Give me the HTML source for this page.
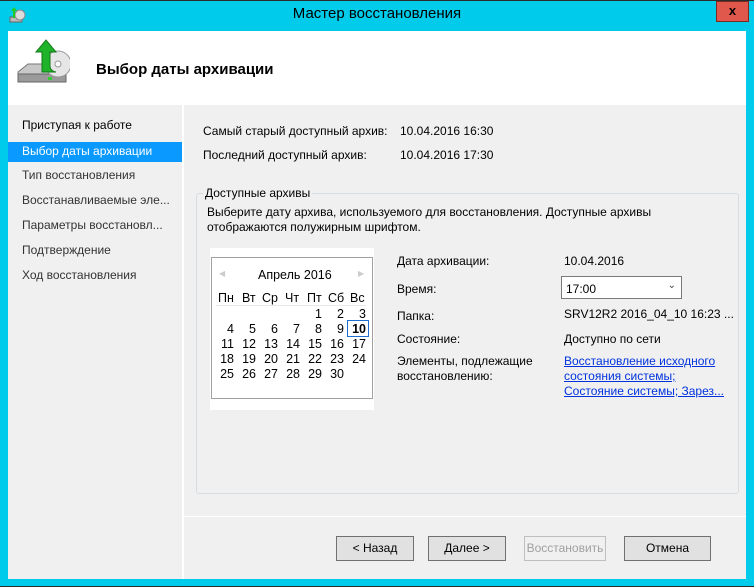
<!DOCTYPE html><html><head><meta charset="utf-8"><style>
*{margin:0;padding:0;box-sizing:border-box}
body{width:754px;height:587px;background:#00cbea;font-family:"Liberation Sans",sans-serif;font-size:12px;color:#000;position:relative;overflow:hidden}
.a{position:absolute;white-space:nowrap}
.nav{color:#333}
.btn{position:absolute;top:536px;height:25px;background:#e1e1e1;border:1px solid #707070;text-align:center;line-height:23px;font-size:12px}
.cal span{position:absolute;width:22px;text-align:right;font-size:12.5px}
</style></head><body>
<div class="a" style="left:0;top:0;width:754px;height:1px;background:#2b2b2b"></div>
<div class="a" style="left:0;top:586px;width:754px;height:1px;background:#2b2b2b"></div>
<div class="a" style="left:0;top:5px;width:754px;text-align:center;font-size:15px;color:#000">Мастер восстановления</div>
<div class="a" style="left:716px;top:1px;width:33px;height:21px;background:#e0574b;border:1px solid #7a2a24;text-align:center;font-weight:bold;font-size:13px;line-height:18px">x</div>
<svg class="a" style="left:8px;top:6px" width="18" height="18" viewBox="0 0 18 18"><rect x="2" y="11" width="12" height="5" fill="#bbb" stroke="#666"/><circle cx="12" cy="9" r="5" fill="#ddd" stroke="#888"/><path d="M5 12V5H3l3-4 3 4H7v7z" fill="#2c2"/></svg>
<div class="a" style="left:8px;top:31px;width:738px;height:548px;background:#f0f0f0"></div>
<div class="a" style="left:8px;top:31px;width:738px;height:74px;background:#fff"></div>
<div class="a" style="left:182px;top:105px;width:2px;height:474px;background:#fff"></div>
<div class="a" style="left:184px;top:516px;width:562px;height:1px;background:#fff"></div>
<svg class="a" style="left:14px;top:38px" width="56" height="50" viewBox="0 0 56 50"><path d="M4 34l10-8h34l4 8v8H4z" fill="#c8c8c8" stroke="#777"/><rect x="4" y="36" width="48" height="8" fill="#9a9a9a" stroke="#666"/><rect x="34" y="39" width="4" height="3" fill="#3c3"/><circle cx="44" cy="26" r="13" fill="#e6e6e6" stroke="#999"/><circle cx="44" cy="26" r="3" fill="#fff" stroke="#999"/><path d="M28 34V14h-6l10-12 10 12h-6v14c0 4 4 6 6 6z" fill="#1fb32a" stroke="#127a1a"/></svg>
<div class="a" style="left:96px;top:61px;font-size:15px;font-weight:bold">Выбор даты архивации</div>
<div class="a" style="left:22px;top:118px">Приступая к работе</div>
<div class="a" style="left:8px;top:142px;width:174px;height:20px;background:#0a99ff"></div>
<div class="a" style="left:22px;top:144px;color:#fff">Выбор даты архивации</div>
<div class="a nav" style="left:22px;top:168px">Тип восстановления</div>
<div class="a nav" style="left:22px;top:193px">Восстанавливаемые эле...</div>
<div class="a nav" style="left:22px;top:218px">Параметры восстановл...</div>
<div class="a nav" style="left:22px;top:243px">Подтверждение</div>
<div class="a nav" style="left:22px;top:268px">Ход восстановления</div>
<div class="a" style="left:203px;top:124px">Самый старый доступный архив:</div>
<div class="a" style="left:400px;top:124px">10.04.2016 16:30</div>
<div class="a" style="left:203px;top:148px">Последний доступный архив:</div>
<div class="a" style="left:400px;top:148px">10.04.2016 17:30</div>
<div class="a" style="left:196px;top:193px;width:543px;height:301px;border:1px solid #d8dde2;border-radius:3px"></div>
<div class="a" style="left:203px;top:186px;background:#f0f0f0;padding:0 2px">Доступные архивы</div>
<div class="a" style="left:207px;top:205px;line-height:15px">Выберите дату архива, используемого для восстановления. Доступные архивы<br>отображаются полужирным шрифтом.</div>
<div class="a" style="left:210px;top:248px;width:164px;height:162px;background:#fff"></div>
<div class="a" style="left:211px;top:257px;width:162px;height:142px;border:1px solid #a0a0a0"></div>
<div class="a" style="left:219px;top:269px;color:#ccc;font-size:8px">◀</div>
<div class="a" style="left:358px;top:269px;color:#ccc;font-size:8px">▶</div>
<div class="a" style="left:258px;top:268px;font-size:12.5px">Апрель 2016</div>
<div class="a" style="left:216px;top:305px;width:150px;height:1px;background:#e8e8e8"></div>
<div class="cal" style="font-size:12.5px">
<div class="a" style="left:218px;top:291px">Пн</div><div class="a" style="left:242px;top:291px">Вт</div><div class="a" style="left:262px;top:291px">Ср</div><div class="a" style="left:285px;top:291px">Чт</div><div class="a" style="left:307px;top:291px">Пт</div><div class="a" style="left:328px;top:291px">Сб</div><div class="a" style="left:350px;top:291px">Вс</div>
</div>
<div class="a cal" style="left:0;top:0">
<div style="position:absolute;top:307px;left:0"><span style="left:300px">1</span><span style="left:322px">2</span><span style="left:344px">3</span></div>
<div style="position:absolute;top:322px;left:0"><span style="left:212px">4</span><span style="left:234px">5</span><span style="left:256px">6</span><span style="left:278px">7</span><span style="left:300px">8</span><span style="left:322px">9</span><span style="left:344px;font-weight:bold">10</span></div>
<div style="position:absolute;top:337px;left:0"><span style="left:212px">11</span><span style="left:234px">12</span><span style="left:256px">13</span><span style="left:278px">14</span><span style="left:300px">15</span><span style="left:322px">16</span><span style="left:344px">17</span></div>
<div style="position:absolute;top:352px;left:0"><span style="left:212px">18</span><span style="left:234px">19</span><span style="left:256px">20</span><span style="left:278px">21</span><span style="left:300px">22</span><span style="left:322px">23</span><span style="left:344px">24</span></div>
<div style="position:absolute;top:367px;left:0"><span style="left:212px">25</span><span style="left:234px">26</span><span style="left:256px">27</span><span style="left:278px">28</span><span style="left:300px">29</span><span style="left:322px">30</span></div>
</div>
<div class="a" style="left:347px;top:320px;width:22px;height:17px;border:1px solid #1a6fd0"></div>
<div class="a" style="left:397px;top:254px">Дата архивации:</div>
<div class="a" style="left:564px;top:254px">10.04.2016</div>
<div class="a" style="left:397px;top:282px">Время:</div>
<div class="a" style="left:561px;top:276px;width:121px;height:23px;border:1px solid #7a7a7a;background:#fff;padding:5px 0 0 4px">17:00<span style="position:absolute;right:5px;top:3px;font-size:10px;color:#444">⌄</span></div>
<div class="a" style="left:397px;top:309px">Папка:</div>
<div class="a" style="left:564px;top:307px">SRV12R2 2016_04_10 16:23 ...</div>
<div class="a" style="left:397px;top:332px">Состояние:</div>
<div class="a" style="left:564px;top:332px">Доступно по сети</div>
<div class="a" style="left:397px;top:354px;line-height:15px">Элементы, подлежащие<br>восстановлению:</div>
<div class="a" style="left:564px;top:354px;line-height:15px;color:#0033dd;text-decoration:underline">Восстановление исходного<br>состояния системы;<br>Состояние системы; Зарез...</div>
<div class="btn" style="left:336px;width:78px">&lt; Назад</div>
<div class="btn" style="left:428px;width:78px">Далее &gt;</div>
<div class="btn" style="left:524px;width:82px;background:#f0f0f0;border-color:#bfbfbf;color:#a0a0a0">Восстановить</div>
<div class="btn" style="left:624px;width:87px">Отмена</div>
</body></html>
